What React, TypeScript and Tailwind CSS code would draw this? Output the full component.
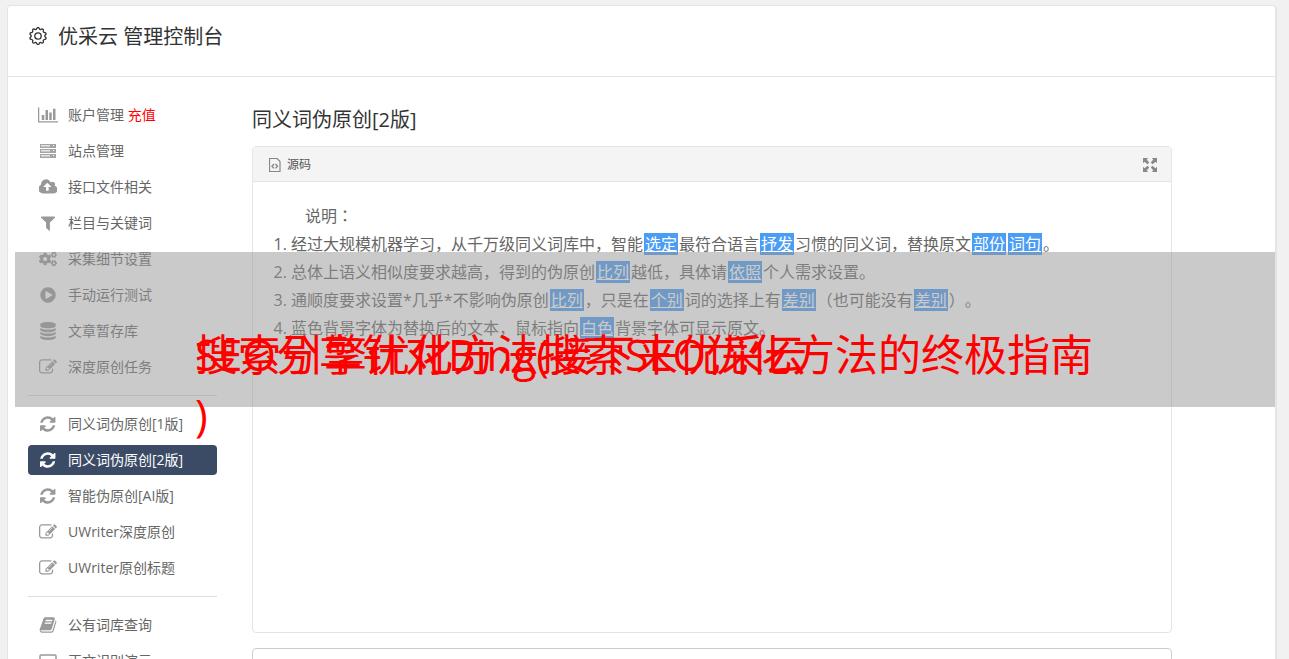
import React from 'react';
import { FaCogs } from 'react-icons/fa';

interface GlyphProps {
  d: string;
  width?: number;
}

// 1792-unit tall icon glyphs
function Glyph({ d, width = 1792 }: GlyphProps) {
  return (
    <svg viewBox={`0 0 ${width} 1792`} className="h-[18px] w-auto" fill="currentColor" aria-hidden="true">
      <path d={d} />
    </svg>);

}

const refreshPath =
'M1511 1056q0 5-1 7-64 268-268 434.5t-478 166.5q-146 0-282.5-55t-243.5-157l-129 129q-19 19-45 19t-45-19-19-45v-448q0-26 19-45t45-19h448q26 0 45 19t19 45-19 45l-137 137q71 66 161 102t187 36q134 0 250-65t186-179q11-17 53-117 8-23 30-23h192q13 0 22.5 9.5t9.5 22.5zm25-800v448q0 26-19 45t-45 19h-448q-26 0-45-19t-19-45 19-45l138-138q-148-137-349-137-134 0-250 65t-186 179q-11 17-53 117-8 23-30 23h-199q-13 0-22.5-9.5t-9.5-22.5v-7q65-268 270-434.5t480-166.5q146 0 284 55.5t245 156.5l130-129q19-19 45-19t45 19 19 45z';
const editPath =
'M888 1184l116-116-152-152-116 116v56h96v96h56zm440-720q-16-16-33 1l-350 350q-17 17-1 33t33-1l350-350q17-17 1-33zm80 594v190q0 119-84.5 203.5t-203.5 84.5h-832q-119 0-203.5-84.5t-84.5-203.5v-832q0-119 84.5-203.5t203.5-84.5h832q63 0 117 25 15 7 18 23 3 17-9 29l-49 49q-14 14-32 8-23-6-45-6h-832q-66 0-113 47t-47 113v832q0 66 47 113t113 47h832q66 0 113-47t47-113v-126q0-13 9-22l64-64q15-15 35-7t20 29zm-96-738l288 288-672 672h-288v-288zm444 132l-92 92-288-288 92-92q28-28 68-28t68 28l152 152q28 28 28 68t-28 68z';
const chartPath =
'M640 896v512h-256v-512h256zm384-512v1024h-256v-1024h256zm1024 1152v128h-2048v-1536h128v1408h1920zm-640-896v768h-256v-768h256zm384-384v1152h-256v-1152h256z';
const cloudPath =
'M1216 864q0-14-9-23l-352-352q-9-9-23-9t-23 9l-351 351q-10 12-10 24 0 14 9 23t23 9h224v352q0 13 9.5 22.5t22.5 9.5h192q13 0 22.5-9.5t9.5-22.5v-352h224q13 0 22.5-9.5t9.5-22.5zm640 288q0 159-112.5 271.5t-271.5 112.5h-1088q-185 0-316.5-131.5t-131.5-316.5q0-130 70-240t188-165q-2-30-2-43 0-212 150-362t362-150q156 0 285.5 87t188.5 231q71-62 166-62 106 0 181 75t75 181q0 76-41 138 130 31 213.5 135.5t83.5 238.5z';
const filterPath =
'M1595 295q17 41-14 70l-493 493v742q0 42-39 59-13 5-25 5-27 0-45-19l-256-256q-19-19-19-45v-486l-493-493q-31-29-14-70 17-39 59-39h1280q42 0 59 39z';
const playPath =
'M896 128q209 0 385.5 103t279.5 279.5 103 385.5-103 385.5-279.5 279.5-385.5 103-385.5-103-279.5-279.5-103-385.5 103-385.5 279.5-279.5 385.5-103zm384 823q32-18 32-55t-32-55l-544-320q-31-19-64-1-32 19-32 56v640q0 37 32 56 16 8 32 8 17 0 32-9z';
const databasePath =
'M896 768q237 0 443-43t325-127v170q0 69-103 128t-280 93.5-385 34.5-385-34.5-280-93.5-103-128v-170q119 84 325 127t443 43zm0 768q237 0 443-43t325-127v170q0 69-103 128t-280 93.5-385 34.5-385-34.5-280-93.5-103-128v-170q119 84 325 127t443 43zm0-384q237 0 443-43t325-127v170q0 69-103 128t-280 93.5-385 34.5-385-34.5-280-93.5-103-128v-170q119 84 325 127t443 43zm0-1152q208 0 385 34.5t280 93.5 103 128v128q0 69-103 128t-280 93.5-385 34.5-385-34.5-280-93.5-103-128v-128q0-69 103-128t280-93.5 385-34.5z';
const bookPath =
'M1703 478q40 57 18 129l-275 906q-19 64-76.5 107.5t-122.5 43.5h-923q-77 0-148.5-53.5t-99.5-131.5q-24-67-2-127 0-4 3-27t4-37q1-8-3-21.5t-3-19.5q2-11 8-21t16.5-23.5 16.5-23.5q23-38 45-91.5t30-91.5q3-10 .5-30t-.5-28q3-11 17-28t17-23q21-36 42-92t25-90q1-9-2.5-32t.5-28q4-13 22-30.5t22-22.5q19-26 42.5-84.5t27.5-96.5q1-8-3-25.5t-2-26.5q2-8 9-18t18-23 17-21q8-12 16.5-30.5t15-35 16-36 19.5-32 26.5-23.5 36-11.5 47.5 5.5l-1 3q38-9 51-9h761q74 0 114 56t18 130l-274 906q-36 119-71.5 153.5t-128.5 34.5h-869q-27 0-38 15-11 16-1 43 24 70 144 70h923q29 0 56-15.5t35-41.5l300-987q7-22 5-57 38 15 59 43zm-1064 2q-4 13 2 22.5t20 9.5h608q13 0 25.5-9.5t16.5-22.5l21-64q4-13-2-22.5t-20-9.5h-608q-13 0-25.5 9.5t-16.5 22.5zm-83 256q-4 13 2 22.5t20 9.5h608q13 0 25.5-9.5t16.5-22.5l21-64q4-13-2-22.5t-20-9.5h-608q-13 0-25.5 9.5t-16.5 22.5z';

function ServerIcon() {
  return (
    <svg viewBox="0 0 16 14" className="h-3.5 w-4" aria-hidden="true">
      {[0, 5, 10].map((y) =>
      <g key={y}>
          <rect x="0" y={y} width="16" height="4" fill="#a4a4a4" />
          <rect x="1" y={y + 1} width="9" height="1" fill="#e4e4e4" />
          <rect x="1" y={y + 2} width="9" height="1" fill="#c8c8c8" />
          <rect x="13" y={y + 1} width="1" height="1" fill="#fff" />
        </g>
      )}
    </svg>);

}

function LaptopIcon() {
  return (
    <svg viewBox="0 0 18 14" className="h-3.5 w-[18px]" fill="none" stroke="currentColor" aria-hidden="true">
      <rect x="1" y="1" width="16" height="10" rx="1" strokeWidth="1.5" />
      <path d="M0 13h18" strokeWidth="2" />
    </svg>);

}

function GearIcon() {
  // scalloped outline with ten teeth
  const points = Array.from({ length: 80 }, (_, i) => {
    const a = i / 80 * Math.PI * 2;
    const r = 7.6 + 0.9 * Math.max(-0.8, Math.min(0.8, 1.6 * Math.cos(a * 10)));
    return `${(10 + r * Math.sin(a)).toFixed(2)},${(10 - r * Math.cos(a)).toFixed(2)}`;
  });
  return (
    <svg viewBox="0 0 20 20" className="h-5 w-5" fill="none" stroke="currentColor" strokeWidth="1.3" aria-hidden="true">
      <polygon points={points.join(' ')} strokeLinejoin="round" />
      <circle cx="10" cy="10" r="3.2" />
    </svg>);

}

function CodeFileIcon() {
  return (
    <svg viewBox="0 0 12 14" className="h-3.5 w-3" fill="none" stroke="currentColor" aria-hidden="true">
      <path d="M.5.5h7.500l3 3v10H.5z" strokeWidth="1.200" />
      <path d="M5 6L3 8.200l2 2.200M6.500 6l2 2.200-2 2.200" strokeWidth="1.400" />
    </svg>);

}

function ExpandIcon() {
  return (
    <svg viewBox="0 0 14 14" className="h-3.5 w-3.5" fill="currentColor" aria-hidden="true">
      <path d="M0 0h5.200L3.700 1.500 6.200 4.500 4.500 6.200 1.500 3.700 0 5.200zM14 0v5.200l-1.500-1.500L9.500 6.200 7.800 4.500l2.500-3L8.800 0zM0 14V8.800l1.500 1.500L4.500 7.800l1.700 1.700-2.500 3L5.200 14zM14 14H8.800l1.500-1.500-2.500-3 1.700-1.700 3 2.500L14 8.800z" />
    </svg>);

}

const navGroups = [
[
{ label: '账户管理', extra: '充值', icon: <Glyph d={chartPath} width={2048} /> },
{ label: '站点管理', icon: <ServerIcon /> },
{ label: '接口文件相关', icon: <Glyph d={cloudPath} width={1856} /> },
{ label: '栏目与关键词', icon: <Glyph d={filterPath} /> },
{ label: '采集细节设置', icon: <FaCogs className="h-4 w-[18px]" /> },
{ label: '手动运行测试', icon: <Glyph d={playPath} /> },
{ label: '文章暂存库', icon: <Glyph d={databasePath} /> },
{ label: '深度原创任务', icon: <Glyph d={editPath} /> }],

[
{ label: '同义词伪原创[1版]', icon: <Glyph d={refreshPath} width={1536} /> },
{ label: '同义词伪原创[2版]', icon: <Glyph d={refreshPath} width={1536} />, active: true },
{ label: '智能伪原创[AI版]', icon: <Glyph d={refreshPath} width={1536} /> },
{ label: 'UWriter深度原创', icon: <Glyph d={editPath} /> },
{ label: 'UWriter原创标题', icon: <Glyph d={editPath} /> }],

[
{ label: '公有词库查询', icon: <Glyph d={bookPath} /> },
{ label: '正文识别演示', icon: <LaptopIcon /> }]];



interface NavItemProps {
  label: string;
  extra?: string;
  icon: React.ReactNode;
  active?: boolean;
}

function NavItem({ label, extra, icon, active }: NavItemProps) {
  return (
    <li>
      <a
        href="#"
        className={`flex h-[30px] items-center rounded pl-2.5 text-sm ${active ? 'bg-[#3b4b66] text-white' : 'text-[#666]'}`}>

        <span className={`flex w-5 justify-center ${active ? 'text-white' : 'text-[#999]'}`}>{icon}</span>
        <span className="ml-2.5 whitespace-nowrap">
          {label}
          {extra && <span className="text-[#f00]"> {extra}</span>}
        </span>
      </a>
    </li>);

}

// Replaced word
function Word({ children }: {children: React.ReactNode;}) {
  return (
    <a href="#" className="mx-px bg-[#4a9df5] px-px text-white underline">
      {children}
    </a>);

}

// Punctuation set in the middle of its cell
function Mark({ children }: {children: React.ReactNode;}) {
  return <span className="font-['Noto_Sans_CJK_TC',sans-serif] leading-none">{children}</span>;
}

export default function App() {
  return (
    <div className="relative h-screen overflow-hidden bg-[#f1f1f1] pt-[5px] pr-3 pl-[7px] font-['Open_Sans','Noto_Sans_CJK_SC',sans-serif] text-[#666] [text-spacing-trim:space-all]">
      <div className="min-h-full rounded-t border border-r-2 border-[#e4e4e4] bg-white">
        <header className="flex h-[71px] items-start border-b border-[#e4e4e4] pt-4 pl-5 text-[#333]">
          <h1 className="flex h-7 items-center gap-2.5 text-xl">
            <GearIcon />
            <span className="pt-0.5">优采云 管理控制台</span>
          </h1>
        </header>

        <div className="flex gap-[35px] pt-[23px] pl-5">
          <nav className="w-[189px] shrink-0">
            {navGroups.map((group, i) =>
            <ul
              key={i}
              className={`flex flex-col gap-1.5 ${i > 0 ? 'mt-[13px] border-t border-[#ddd] pt-[13px]' : ''}`}>

                {group.map((item) =>
              <NavItem key={item.label} {...item} />
              )}
              </ul>
            )}
          </nav>

          <main className="mr-[103px] min-w-0 flex-1">
            <h2 className="mb-1.5 text-xl leading-10 text-[#333]">同义词伪原创[2版]</h2>
            <section className="min-h-[487px] rounded border border-[#e4e4e4]">
              <div className="flex h-[35px] items-center border-b border-[#e4e4e4] bg-[#f4f4f4] pt-0.5 pr-3.5 pl-4 text-xs text-[#555]">
                <span className="text-[#888]"><CodeFileIcon /></span>
                <span className="ml-1.5">源码</span>
                <button type="button" aria-label="全屏" className="ml-auto text-[#888]">
                  <ExpandIcon />
                </button>
              </div>
              <div className="pt-5 text-base leading-7">
                <p className="pl-[52px]">说明<Mark>：</Mark></p>
                <ol className="list-decimal pl-[38px]">
                  <li>
                    经过大规模机器学习，从千万级同义词库中，智能<Word>选定</Word>最符合语言<Word>抒发</Word>习惯的同义词，替换原文<Word>部份</Word><Word>词句</Word>。
                  </li>
                  <li>
                    总体上语义相似度要求越高，得到的伪原创<Word>比列</Word>越低，具体请<Word>依照</Word>个人需求设置。
                  </li>
                  <li>
                    通顺度要求设置*几乎*不影响伪原创<Word>比列</Word>，只是在<Word>个别</Word>词的选择上有<Word>差别</Word><Mark>（</Mark>也可能没有<Word>差别</Word><Mark>）</Mark>。
                  </li>
                  <li>
                    蓝色背景字体为替换后的文本，鼠标指向<Word>白色</Word>背景字体可显示原文。
                  </li>
                </ol>
              </div>
            </section>
            <textarea aria-label="内容" className="mt-[15px] block h-40 w-full resize-none rounded border border-[#ccc] bg-white" />
          </main>
        </div>
      </div>

      {/* Title banner over the page */}
      <div className="pointer-events-none absolute top-[252px] right-3.5 left-[15px] h-[155px] bg-[#969696]/50" />
      <div className="pointer-events-none absolute top-[325px] right-[180px] left-[195px] grid text-[43px] leading-[60px] text-[#f00]">
        <p className="col-start-1 row-start-1 whitespace-nowrap">SEO分享针对Bing(接下来优采云</p>
        <p className="col-start-1 row-start-1">
          搜索引擎优化方法搜索SEO优化方法的终极指南<br />)
        </p>
      </div>
    </div>);

}
